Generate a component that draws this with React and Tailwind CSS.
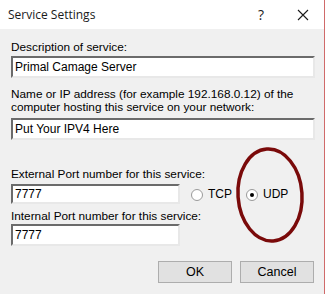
import { useState } from 'react';

const Field = ({ value, className = '' }) => (
  <div
    className={`flex items-center bg-white border-2 border-t-[#6b6b6b] border-l-[#6b6b6b] border-r-[#e8e8e8] border-b-[#e8e8e8] pl-[2px] text-[12px] text-black font-['Liberation_Sans',sans-serif] ${className}`}
  >
    {value}
  </div>
);

const Radio = ({ label, checked, onClick }) => (
  <button onClick={onClick} className="flex items-center gap-[5px] text-[12px] leading-[13px] text-black">
    <span className="w-[12px] h-[12px] rounded-full bg-white border border-[#9a9a9a] flex items-center justify-center">
      {checked && <span className="w-[4px] h-[4px] rounded-full bg-black" />}
    </span>
    {label}
  </button>
);

const App = () => {
  const [proto, setProto] = useState('UDP');

  return (
    <div className="w-[328px] h-[294px] bg-white overflow-hidden font-['Liberation_Sans',Arial,sans-serif]">
      <div className="relative w-[325px] h-[294px] border-r border-[#d06a6a]">
        {/* Title bar */}
        <div className="h-[29px] bg-white flex items-center pl-[8px] text-[12px] text-[#1a1a1a] font-['Open_Sans',sans-serif]">
          <span className="flex-1">Service Settings</span>
          <span className="w-[20px] text-center text-[14px] mr-[26px]">?</span>
          <svg width="12" height="12" viewBox="0 0 12 12" className="mr-[15px]">
            <path d="M1 1 L11 11 M11 1 L1 11" stroke="#1a1a1a" strokeWidth="1.1" />
          </svg>
        </div>

        {/* Body */}
        <div className="h-[265px] bg-[#f0f0f0] px-[11px] pt-[12px] text-[11.8px] leading-[13px] text-black whitespace-nowrap">
          <div>Description of service:</div>
          <Field value="Primal Camage Server" className="mt-[2px] h-[22px] w-[304px]" />

          <div className="mt-[10px]">Name or IP address (for example 192.168.0.12) of the</div>
          <div>computer hosting this service on your network:</div>
          <Field value="Put Your IPV4 Here" className="mt-[4px] h-[22px] w-[304px]" />

          <div className="flex mt-[28px]">
            <div className="w-[169px]">
              <div>External Port number for this service:</div>
              <Field value="7777" className="mt-[3px] h-[20px] w-[169px]" />
              <div className="mt-[6px]">Internal Port number for this service:</div>
              <Field value="7777" className="mt-[1px] h-[22px] w-[169px]" />
            </div>
            <div className="flex items-start pt-[20px] pl-[11px] gap-[14px]">
              <Radio label="TCP" checked={proto === 'TCP'} onClick={() => setProto('TCP')} />
              <Radio label="UDP" checked={proto === 'UDP'} onClick={() => setProto('UDP')} />
            </div>
          </div>

          <div className="flex justify-end gap-[8px] mt-[15px]">
            <button className="w-[74px] h-[22px] bg-[#e1e1e1] border border-[#adadad] text-[12.5px]">OK</button>
            <button className="w-[74px] h-[22px] bg-[#e1e1e1] border border-[#adadad] text-[12.5px] mr-[-1px]">Cancel</button>
          </div>
        </div>

        {/* Hand-drawn highlight around UDP */}
        <svg className="absolute left-[232px] top-[144px] pointer-events-none" width="76" height="102" viewBox="0 0 76 102">
          <ellipse cx="38" cy="51" rx="32" ry="46" fill="none" stroke="#7a0a0a" strokeWidth="3.5" transform="rotate(-4 38 51)" />
        </svg>
      </div>
    </div>
  );
};

export default App;
